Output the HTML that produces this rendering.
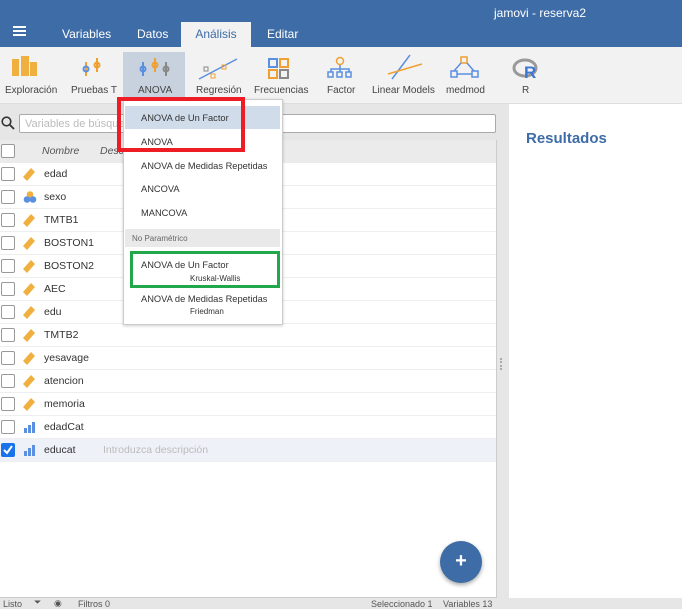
<!DOCTYPE html><html><head><meta charset="utf-8"><style>
*{box-sizing:border-box;margin:0;padding:0}
body{width:682px;height:608px;overflow:hidden;position:relative;font-family:"Liberation Sans",sans-serif;font-size:11px;background:#e6e6e6;color:#333}
.abs{position:absolute}
.hdr{left:0;top:0;width:682px;height:47px;background:#3e6ca6;color:#fff}
.tab{top:22px;height:25px;line-height:24px;font-size:12px;color:#fff}
.tb{left:0;top:47px;width:682px;height:57px;background:#f2f2f2;border-bottom:1px solid #ddd}
.tl{top:38px;font-size:10px;color:#444;text-align:center}
.row{left:0;width:496px;height:23px;border-bottom:1px solid #eee;background:#fff}
.cb{position:absolute;left:1px;top:4px;width:14px;height:14px;border:1px solid #999;border-radius:2px;background:#fff}
.nm{position:absolute;left:44px;top:5px;font-size:10.5px}
.ic{position:absolute;left:23px;top:4px;width:14px;height:14px}
.mi{left:141px;font-size:9.3px;color:#333}
</style></head><body>
<div class="abs hdr">
<div class="abs" style="left:494px;top:6px;font-size:12px">jamovi - reserva2</div>
<div class="abs" style="left:13px;top:30px;width:13px;height:2px;background:#fff;box-shadow:0 4px #fff,0 -4px #fff"></div>
<div class="abs tab" style="left:62px">Variables</div>
<div class="abs tab" style="left:137px">Datos</div>
<div class="abs tab" style="left:181px;width:70px;background:#f2f2f2;color:#3e6ca6;text-align:center;">Análisis</div>
<div class="abs tab" style="left:267px">Editar</div>
</div>
<div class="abs tb">
<div class="abs" style="left:123px;top:5px;width:62px;height:52px;background:#c8d2de"></div>
<svg class="abs" style="left:0;top:0" width="682" height="40">
<rect x="12" y="12" width="7" height="17" fill="#f0b040"/><rect x="21" y="9" width="8" height="20" fill="#f0b040"/><rect x="30" y="15" width="7" height="14" fill="#f0b040"/>
<g stroke-width="2" fill="none"><path d="M86 15v14M97 11v14" stroke="#f0a030"/><circle cx="86" cy="22" r="2.5" stroke="#5b8fe0"/><circle cx="97" cy="18" r="2.5" stroke="#f0a030"/></g>
<g stroke-width="2" fill="none"><path d="M143 15v14" stroke="#5b8fe0"/><path d="M155 11v14" stroke="#f0a030"/><path d="M166 15v14" stroke="#888"/><circle cx="143" cy="22" r="2.5" stroke="#5b8fe0"/><circle cx="155" cy="18" r="2.5" stroke="#f0a030"/><circle cx="166" cy="22" r="2.5" stroke="#888"/></g>
<path d="M199 32L237 12" stroke="#5b8fe0" stroke-width="1.5"/><rect x="204" y="20" width="4" height="4" fill="none" stroke="#888"/><rect x="222" y="18" width="4" height="4" fill="none" stroke="#f0a030"/><rect x="211" y="27" width="4" height="4" fill="none" stroke="#f0a030"/>
<rect x="269" y="12" width="8" height="8" fill="none" stroke="#5b8fe0" stroke-width="2"/><rect x="280" y="12" width="8" height="8" fill="none" stroke="#f0a030" stroke-width="2"/><rect x="269" y="23" width="8" height="8" fill="none" stroke="#f0a030" stroke-width="2"/><rect x="280" y="23" width="8" height="8" fill="none" stroke="#888" stroke-width="2"/>
<g fill="none" stroke-width="1.5"><circle cx="340" cy="14" r="3.5" stroke="#f0a030"/><path d="M340 18v4M331 25v-3h18v3M340 22v3" stroke="#5b8fe0"/><rect x="328" y="25" width="5" height="5" stroke="#5b8fe0"/><rect x="337" y="25" width="5" height="5" stroke="#5b8fe0"/><rect x="346" y="25" width="5" height="5" stroke="#5b8fe0"/></g>
<path d="M392 32L410 8" stroke="#5b8fe0" stroke-width="1.5"/><path d="M388 27L422 17" stroke="#f0a030" stroke-width="1.5"/>
<g fill="none" stroke-width="1.5"><rect x="461" y="10" width="6" height="6" stroke="#f0a030"/><path d="M461 16L454 24M467 16L474 24M457 27h15" stroke="#5b8fe0"/><rect x="451" y="24" width="6" height="6" stroke="#5b8fe0"/><rect x="472" y="24" width="6" height="6" stroke="#5b8fe0"/></g>
<ellipse cx="525" cy="21" rx="11" ry="8" fill="none" stroke="#999" stroke-width="3"/><text x="524" y="31" font-family="Liberation Sans" font-weight="bold" font-size="17" fill="#3e77d0">R</text>
</svg>
<div class="abs tl" style="left:5px">Exploración</div>
<div class="abs tl" style="left:71px">Pruebas T</div>
<div class="abs tl" style="left:138px">ANOVA</div>
<div class="abs tl" style="left:196px">Regresión</div>
<div class="abs tl" style="left:254px">Frecuencias</div>
<div class="abs tl" style="left:327px">Factor</div>
<div class="abs tl" style="left:372px">Linear Models</div>
<div class="abs tl" style="left:446px">medmod</div>
<div class="abs tl" style="left:522px">R</div>
</div>
<svg class="abs" style="left:1px;top:116px" width="14" height="14"><circle cx="5.5" cy="5.5" r="4.3" fill="none" stroke="#333" stroke-width="1.6"/><path d="M9 9l4 4" stroke="#333" stroke-width="1.8"/></svg>
<div class="abs" style="left:19px;top:114px;width:477px;height:19px;background:#fff;border:1px solid #aaa;border-radius:2px;color:#bbb;font-size:11px;padding:3px 5px">Variables de búsqueda</div>
<div class="abs" style="left:0;top:140px;width:497px;height:458px;background:#fff;border-right:1px solid #ccc;border-bottom:1px solid #ccc"></div>
<div class="abs" style="left:0;top:140px;width:496px;height:23px;background:#ebebeb">
<div class="cb"></div><div class="nm" style="left:42px;font-style:italic;color:#555">Nombre</div><div class="nm" style="left:100px;font-style:italic;color:#555">Desc</div></div>
<div class="abs row" style="top:163px"><div class="cb"></div><svg class="ic"><path d="M0 10L8 1L12 5L4 14Z" fill="#f0b040"/></svg><div class="nm">edad</div></div>
<div class="abs row" style="top:186px"><div class="cb"></div><svg class="ic"><circle cx="7" cy="4.5" r="3.3" fill="#f0b040"/><circle cx="4" cy="9.5" r="3.3" fill="#5b8fe0"/><circle cx="10" cy="9.5" r="3.3" fill="#5b8fe0"/></svg><div class="nm">sexo</div></div>
<div class="abs row" style="top:209px"><div class="cb"></div><svg class="ic"><path d="M0 10L8 1L12 5L4 14Z" fill="#f0b040"/></svg><div class="nm">TMTB1</div></div>
<div class="abs row" style="top:232px"><div class="cb"></div><svg class="ic"><path d="M0 10L8 1L12 5L4 14Z" fill="#f0b040"/></svg><div class="nm">BOSTON1</div></div>
<div class="abs row" style="top:255px"><div class="cb"></div><svg class="ic"><path d="M0 10L8 1L12 5L4 14Z" fill="#f0b040"/></svg><div class="nm">BOSTON2</div></div>
<div class="abs row" style="top:278px"><div class="cb"></div><svg class="ic"><path d="M0 10L8 1L12 5L4 14Z" fill="#f0b040"/></svg><div class="nm">AEC</div></div>
<div class="abs row" style="top:301px"><div class="cb"></div><svg class="ic"><path d="M0 10L8 1L12 5L4 14Z" fill="#f0b040"/></svg><div class="nm">edu</div></div>
<div class="abs row" style="top:324px"><div class="cb"></div><svg class="ic"><path d="M0 10L8 1L12 5L4 14Z" fill="#f0b040"/></svg><div class="nm">TMTB2</div></div>
<div class="abs row" style="top:347px"><div class="cb"></div><svg class="ic"><path d="M0 10L8 1L12 5L4 14Z" fill="#f0b040"/></svg><div class="nm">yesavage</div></div>
<div class="abs row" style="top:370px"><div class="cb"></div><svg class="ic"><path d="M0 10L8 1L12 5L4 14Z" fill="#f0b040"/></svg><div class="nm">atencion</div></div>
<div class="abs row" style="top:393px"><div class="cb"></div><svg class="ic"><path d="M0 10L8 1L12 5L4 14Z" fill="#f0b040"/></svg><div class="nm">memoria</div></div>
<div class="abs row" style="top:416px"><div class="cb"></div><svg class="ic"><rect x="1" y="8" width="3" height="5" fill="#5b8fe0"/><rect x="5" y="5" width="3" height="8" fill="#5b8fe0"/><rect x="9" y="2" width="3" height="11" fill="#5b8fe0"/></svg><div class="nm">edadCat</div></div>
<div class="abs row" style="top:439px;background:#eef1f8"><div class="cb" style="background:#1a73e8;border-color:#1a73e8"><svg width="12" height="12" style="position:absolute;left:0;top:0"><path d="M2 6l3 3 5-7" stroke="#fff" stroke-width="2" fill="none"/></svg></div><svg class="ic"><rect x="1" y="8" width="3" height="5" fill="#5b8fe0"/><rect x="5" y="5" width="3" height="8" fill="#5b8fe0"/><rect x="9" y="2" width="3" height="11" fill="#5b8fe0"/></svg><div class="nm">educat</div><div class="nm" style="left:103px;color:#bbb">Introduzca descripción</div></div>
<div class="abs" style="left:440px;top:541px;width:42px;height:42px;border-radius:50%;background:#3e6ca6;box-shadow:0 2px 4px rgba(0,0,0,.35);color:#fff;font-size:20px;font-weight:bold;text-align:center;line-height:40px">+</div>
<div class="abs" style="left:500px;top:358px;width:3px;height:12px;border-left:2px dotted #aaa"></div>
<div class="abs" style="left:509px;top:104px;width:173px;height:494px;background:#fff"></div>
<div class="abs" style="left:526px;top:130px;font-size:15px;font-weight:bold;color:#3e6ca6">Resultados</div>
<div class="abs" style="left:0;top:598px;width:682px;height:10px;font-size:9px;color:#555">
<span class="abs" style="left:3px;top:1px">Listo</span><span class="abs" style="left:34px;top:-1px">⏷</span><span class="abs" style="left:54px;top:0">◉</span><span class="abs" style="left:78px;top:1px">Filtros 0</span><span class="abs" style="left:371px;top:1px">Seleccionado 1</span><span class="abs" style="left:443px;top:1px">Variables 13</span></div>
<div class="abs" style="left:123px;top:99px;width:160px;height:226px;background:#fff;border:1px solid #ccc;box-shadow:0 1px 3px rgba(0,0,0,.2)"></div>
<div class="abs" style="left:125px;top:106px;width:155px;height:23px;background:#d0dcea"></div>
<div class="abs mi" style="top:113px">ANOVA de Un Factor</div>
<div class="abs mi" style="top:137px">ANOVA</div>
<div class="abs mi" style="top:161px">ANOVA de Medidas Repetidas</div>
<div class="abs mi" style="top:184px">ANCOVA</div>
<div class="abs mi" style="top:208px">MANCOVA</div>
<div class="abs" style="left:125px;top:229px;width:155px;height:18px;background:#e9e9e9;font-size:8px;color:#666;padding:5px 7px">No Paramétrico</div>
<div class="abs mi" style="top:260px">ANOVA de Un Factor</div>
<div class="abs" style="left:190px;top:274px;font-size:8px">Kruskal-Wallis</div>
<div class="abs mi" style="top:294px">ANOVA de Medidas Repetidas</div>
<div class="abs" style="left:190px;top:307px;font-size:8px">Friedman</div>
<div class="abs" style="left:117px;top:97px;width:128px;height:55px;border:4px solid #ee1c24"></div>
<div class="abs" style="left:130px;top:251px;width:150px;height:37px;border:3px solid #22a84a"></div>
</body></html>
